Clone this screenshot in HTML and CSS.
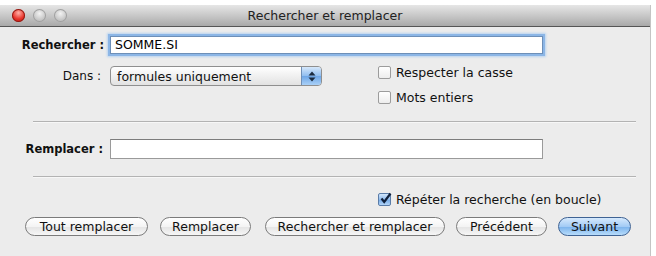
FILE: index.html
```html
<!DOCTYPE html>
<html lang="fr">
<head>
    <meta charset="utf-8">
    <title>Rechercher et remplacer</title>
    <link rel="stylesheet" href="styles.css">
</head>
<body>
<div class="window">
    <div class="titlebar">
        <div class="lights">
            <span class="light close"></span>
            <span class="light"></span>
            <span class="light"></span>
        </div>
        <div class="title">Rechercher et remplacer</div>
    </div>

    <div class="content">
        <div class="row find-row">
            <div class="label strong">Rechercher :</div>
            <div class="field focus">SOMME.SI</div>
        </div>

        <div class="row options-row">
            <div class="label">Dans :</div>
            <div class="popup">
                <span class="popup-text">formules uniquement</span>
                <span class="popup-arrows">
                    <svg width="8" height="11" viewBox="0 0 8 11">
                        <path d="M4 0.5 L7.5 4.5 L0.5 4.5 Z" fill="#1b2b40"/>
                        <path d="M4 10.5 L7.5 6.5 L0.5 6.5 Z" fill="#1b2b40"/>
                    </svg>
                </span>
            </div>
            <div class="checks">
                <div class="check"><span class="box"></span>Respecter la casse</div>
                <div class="check"><span class="box"></span>Mots entiers</div>
            </div>
        </div>

        <div class="sep"></div>

        <div class="row replace-row">
            <div class="label strong">Remplacer :</div>
            <div class="field"></div>
        </div>

        <div class="sep"></div>

        <div class="loop-row">
            <div class="check">
                <span class="box checked">
                    <svg width="13" height="13" viewBox="0 0 13 13">
                        <path d="M2.5 6.5 L5.2 10 L11.5 1.5" fill="none" stroke="#10203a" stroke-width="2.2"/>
                    </svg>
                </span>Répéter la recherche (en boucle)
            </div>
        </div>

        <div class="buttons">
            <div class="btn btn-all">Tout remplacer</div>
            <div class="btn btn-replace">Remplacer</div>
            <div class="btn btn-findreplace">Rechercher et remplacer</div>
            <div class="btn btn-prev">Précédent</div>
            <div class="btn btn-next default">Suivant</div>
        </div>
    </div>
</div>
</body>
</html>
```

FILE: styles.css
```css
body {
    margin: 0;
    background: #ffffff;
    font-family: "DejaVu Sans", sans-serif;
    font-size: 12px;
    color: #111;
}

.window {
    margin-top: 5px;
    width: 650px;
    height: 251px;
    background: #ececec;
    border-right: 1px solid #c4c4c4;
}

/* title bar */
.titlebar {
    height: 21px;
    display: flex;
    align-items: center;
    background: linear-gradient(#e6e6e6, #c8c8c8 50%, #a9a9a9);
    border-bottom: 1px solid #555;
    position: relative;
}

.lights {
    display: flex;
    gap: 8px;
    padding-left: 12px;
}

.light {
    width: 13px;
    height: 13px;
    border-radius: 50%;
    background: radial-gradient(circle at 50% 35%, #f2f2f2, #c6c6c6 60%, #a8a8a8);
    box-shadow: inset 0 0 0 1px #a0a0a0;
}

.light.close {
    background: radial-gradient(circle at 50% 30%, #ffb0a8, #e8332a 55%, #a8140e);
    box-shadow: inset 0 0 0 1px #8e1b14;
}

.title {
    position: absolute;
    left: 0;
    right: 0;
    text-align: center;
    font-size: 12.5px;
    color: #222;
    pointer-events: none;
}

/* form rows */
.content {
    padding-top: 9px;
}

.row {
    display: flex;
    align-items: center;
}

.label {
    width: 110px;
    text-align: right;
    padding-right: 6px;
    box-sizing: border-box;
    flex: none;
}

.strong {
    font-weight: bold;
    font-size: 11.5px;
}

.field {
    width: 433px;
    height: 18px;
    box-sizing: border-box;
    background: #fff;
    border: 1px solid #9a9a9a;
    border-top-color: #7d7d7d;
    line-height: 16px;
    padding-left: 4px;
    font-size: 12.5px;
    color: #000;
}

.field.focus {
    box-shadow: 0 0 0 2px #8cb6e6, 0 0 2px 3px #b9d4f0;
    border-color: #6d8fb8;
}

.options-row {
    margin-top: 12px;
    align-items: flex-start;
}

.options-row .label {
    padding-top: 3px;
    padding-right: 9px;
}

.popup {
    width: 212px;
    height: 20px;
    box-sizing: border-box;
    border: 1px solid #8f8f8f;
    border-radius: 4px;
    background: linear-gradient(#ffffff, #f0f0f0 50%, #e2e2e2);
    display: flex;
    align-items: center;
    overflow: hidden;
}

.popup-text {
    flex: 1;
    padding-left: 6px;
    font-size: 12.5px;
}

.popup-arrows {
    width: 19px;
    height: 100%;
    display: flex;
    align-items: center;
    justify-content: center;
    border-left: 1px solid #6f8fb6;
    background: linear-gradient(#d6e8fb, #8fbdf0 50%, #6ea6e6 51%, #a9d0f7);
}

.checks {
    margin-left: 56px;
    display: flex;
    flex-direction: column;
    gap: 12px;
}

.check {
    display: flex;
    align-items: center;
    gap: 5px;
    font-size: 12.5px;
    line-height: 13px;
}

.box {
    width: 13px;
    height: 13px;
    box-sizing: border-box;
    border: 1px solid #9c9c9c;
    border-radius: 2px;
    background: linear-gradient(#ffffff, #ededed);
    flex: none;
    position: relative;
}

.box.checked {
    border-color: #5a7ca8;
    background: linear-gradient(#d2e6fb, #8fbcee 50%, #72a8e6 51%, #b3d5f8);
}

.box.checked svg {
    position: absolute;
    left: 0;
    top: -2px;
}

.sep {
    margin: 17px 0 0 33px;
    width: 603px;
    height: 1px;
    background: #b3b3b3;
    border-bottom: 1px solid #f7f7f7;
}

.replace-row {
    margin-top: 16px;
}

.replace-row .label {
    padding-right: 7px;
}

.replace-row .field {
    height: 20px;
}

.loop-row {
    margin: 15px 0 0 378px;
}

.buttons {
    display: flex;
    margin: 11px 0 0 25px;
    gap: 11px;
}

.btn {
    height: 19px;
    box-sizing: border-box;
    border: 1px solid #7b7b7b;
    border-radius: 10px;
    background: linear-gradient(#ffffff, #f4f4f4 50%, #e4e4e4 51%, #f6f6f6);
    font-size: 12.5px;
    line-height: 17px;
    text-align: center;
    color: #111;
}

.btn-all { width: 123px; }
.btn-replace { width: 91px; margin-left: 1px; }
.btn-findreplace { width: 180px; margin-left: 3px; }
.btn-prev { width: 91px; }
.btn-next { width: 73px; }

.btn.default {
    border-color: #3f6394;
    background: linear-gradient(#d6e9fd, #a3cbf5 50%, #7ab2ec 51%, #b7dcfb);
}
```
